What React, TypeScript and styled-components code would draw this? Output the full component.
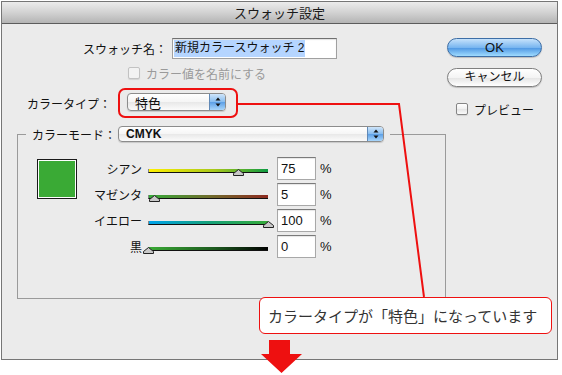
import React from "react";
import styled, { createGlobalStyle } from "styled-components";

const GlobalStyle = createGlobalStyle`
  html, body {
    margin: 0;
    padding: 0;
    background: #fff;
  }
  body {
    font-family: "Liberation Sans", "Noto Sans CJK JP", sans-serif;
    font-size: 12px;
    color: #111;
  }
  * {
    box-sizing: border-box;
  }
`;

const RED = "#ee1010";

type SliderData = {
  label: string;
  value: number;
  gradient: string;
};

const sliders: SliderData[] = [
  { label: "シアン", value: 75, gradient: "linear-gradient(to right, #fff000, #a8c81a 55%, #0c9a42)" },
  { label: "マゼンタ", value: 5, gradient: "linear-gradient(to right, #35aa38, #6f6e2c 50%, #8d2a20)" },
  { label: "イエロー", value: 100, gradient: "linear-gradient(to right, #00a3ea, #14a07a 50%, #35aa38)" },
  { label: "黒", value: 0, gradient: "linear-gradient(to right, #3aaa35, #1d5a1f 55%, #000)" },
];

export default function App() {
  return (
    <Page>
      <GlobalStyle />
      <Window>
        <TitleBar>スウォッチ設定</TitleBar>
        <Body>
          <Top>
            <LeftForm>
              <NameRow>
                <NameLabel>スウォッチ名：</NameLabel>
                <NameInput>
                  <Selection>新規カラースウォッチ 2</Selection>
                </NameInput>
              </NameRow>
              <CheckRow $indent={126} $top={8}>
                <CheckBox $disabled />
                <CheckText $disabled>カラー値を名前にする</CheckText>
              </CheckRow>
              <TypeRow>
                <TypeLabel>カラータイプ：</TypeLabel>
                <Highlight>
                  <Popup width={99} height={18} text="特色" />
                </Highlight>
              </TypeRow>
            </LeftForm>
            <ButtonColumn>
              <AquaButton $primary>OK</AquaButton>
              <AquaButton>キャンセル</AquaButton>
              <CheckRow $indent={9} $top={16}>
                <CheckBox />
                <CheckText>プレビュー</CheckText>
              </CheckRow>
            </ButtonColumn>
          </Top>

          <Group>
            <GroupLegend>
              <LegendLabel>カラーモード：</LegendLabel>
              <Popup width={266} height={16} text="CMYK" bold />
            </GroupLegend>
            <GroupContent>
              <Swatch>
                <SwatchFill />
              </Swatch>
              <SliderList>
                {sliders.map((s) => (
                  <SliderRow key={s.label}>
                    <SliderLabel>{s.label}</SliderLabel>
                    <TrackCell>
                      <Track style={{ background: s.gradient }} />
                      <Thumb style={{ left: `calc(${s.value}% - 5px)` }}>
                        <svg width="11" height="7" viewBox="0 0 11 7">
                          <path
                            d="M5.5 0.5 L10.5 4.5 L10.5 6.5 L0.5 6.5 L0.5 4.5 Z"
                            fill="#c8c8c8"
                            stroke="#222"
                            strokeWidth="1"
                          />
                        </svg>
                      </Thumb>
                    </TrackCell>
                    <ValueInput>{s.value}</ValueInput>
                    <Percent>%</Percent>
                  </SliderRow>
                ))}
              </SliderList>
            </GroupContent>
          </Group>
        </Body>
      </Window>

      <Overlay width="562" height="375" viewBox="0 0 562 375">
        <polyline
          points="238,104 399,104 424,297"
          fill="none"
          stroke={RED}
          strokeWidth="2"
        />
        <polygon
          points="269,340 290,340 290,354 302,354 281.5,373 261,354 269,354"
          fill={RED}
        />
      </Overlay>
      <Callout>カラータイプが「特色」になっています</Callout>
    </Page>
  );
}

function Popup({
  width,
  height,
  text,
  bold,
}: {
  width: number;
  height: number;
  text: string;
  bold?: boolean;
}) {
  return (
    <PopupBox $w={width} $h={height}>
      <PopupText $bold={bold}>{text}</PopupText>
      <Stepper>
        <svg width="6" height="10" viewBox="0 0 6 10">
          <path d="M3 0.5 L5.5 3.5 L0.5 3.5 Z" fill="#111" />
          <path d="M3 9.5 L5.5 6.5 L0.5 6.5 Z" fill="#111" />
        </svg>
      </Stepper>
    </PopupBox>
  );
}

const Page = styled.div`
  position: relative;
  width: 562px;
  height: 375px;
  overflow: hidden;
`;

const Window = styled.div`
  margin: 1px 0 0 1px;
  width: 557px;
  height: 359px;
  border: 1px solid #767676;
  background: #ebebeb;
  display: flex;
  flex-direction: column;
`;

const TitleBar = styled.div`
  height: 22px;
  flex-shrink: 0;
  border-bottom: 1px solid #5c5c5c;
  background: linear-gradient(#ececec, #d2d2d2 50%, #b4b4b4);
  display: flex;
  align-items: center;
  justify-content: center;
  font-family: "Noto Sans CJK JP", sans-serif;
  font-size: 13px;
  color: #1a1a1a;
`;

const Body = styled.div`
  display: flex;
  flex-direction: column;
  padding-top: 14px;
`;

const Top = styled.div`
  display: flex;
`;

const LeftForm = styled.div`
  width: 445px;
  display: flex;
  flex-direction: column;
`;

const NameRow = styled.div`
  display: flex;
  align-items: center;
  height: 21px;
`;

const NameLabel = styled.span`
  width: 165px;
  margin-right: 5px;
  text-align: right;
  font-size: 12px;
`;

const NameInput = styled.div`
  width: 165px;
  height: 21px;
  background: #fff;
  border: 1px solid #a0a0a0;
  border-top-color: #707070;
  box-shadow: inset 0 1px 1px rgba(0, 0, 0, 0.12);
  padding: 1px 0 0 1px;
  font-size: 12px;
`;

const Selection = styled.span`
  display: inline-block;
  height: 17px;
  line-height: 17px;
  padding: 0 1px;
  background: #b5d5ff;
`;

const CheckRow = styled.label<{ $indent: number; $top: number }>`
  display: flex;
  align-items: center;
  gap: 6px;
  height: 12px;
  margin-top: ${({ $top }) => $top}px;
  padding-left: ${({ $indent }) => $indent}px;
`;

const CheckBox = styled.span<{ $disabled?: boolean }>`
  width: 12px;
  height: 12px;
  border-radius: 2px;
  border: 1px solid ${({ $disabled }) => ($disabled ? "#c2c2c2" : "#858585")};
  background: ${({ $disabled }) =>
    $disabled ? "#f2f2f2" : "linear-gradient(#ffffff, #f0f0f0 50%, #e4e4e4 51%, #fafafa)"};
  box-shadow: 0 1px 1px rgba(0, 0, 0, 0.1);
`;

const CheckText = styled.span<{ $disabled?: boolean }>`
  font-size: 12px;
  color: ${({ $disabled }) => ($disabled ? "#9a9a9a" : "#111")};
`;

const TypeRow = styled.div`
  display: flex;
  align-items: center;
  margin-top: 9px;
  padding-left: 25px;
`;

const TypeLabel = styled.span`
  width: 91px;
  font-size: 12px;
`;

const Highlight = styled.div`
  width: 120px;
  height: 30px;
  border: 2px solid ${RED};
  border-radius: 7px;
  padding: 3px 0 0 7px;
`;

const PopupBox = styled.div<{ $w: number; $h: number }>`
  display: flex;
  width: ${({ $w }) => $w}px;
  height: ${({ $h }) => $h}px;
  border: 1px solid #8c8c8c;
  border-radius: 4px;
  overflow: hidden;
  background: linear-gradient(#ffffff, #f5f5f5 50%, #e8e8e8 51%, #fbfbfb);
  box-shadow: 0 1px 1px rgba(0, 0, 0, 0.15);
`;

const PopupText = styled.span<{ $bold?: boolean }>`
  flex: 1;
  display: flex;
  align-items: center;
  padding-left: 7px;
  font-size: ${({ $bold }) => ($bold ? "12px" : "13px")};
  font-weight: ${({ $bold }) => ($bold ? 700 : 400)};
`;

const Stepper = styled.span`
  width: 16px;
  display: flex;
  align-items: center;
  justify-content: center;
  border-left: 1px solid #6189b6;
  background: linear-gradient(#cfe5fa, #86bcef 50%, #5c9fe6 51%, #a9d6fb);
`;

const ButtonColumn = styled.div`
  width: 95px;
  display: flex;
  flex-direction: column;
  gap: 11px;

  & > label {
    margin-top: 5px;
  }
`;

const AquaButton = styled.button<{ $primary?: boolean }>`
  width: 95px;
  height: 19px;
  padding: 0;
  border-radius: 10px;
  border: 1px solid ${({ $primary }) => ($primary ? "#3d6ea6" : "#7f7f7f")};
  background: ${({ $primary }) =>
    $primary
      ? "linear-gradient(#c6e2fb, #79b6f0 50%, #4c95e2 51%, #9fdbff)"
      : "linear-gradient(#ffffff, #f4f4f4 50%, #e4e4e4 51%, #ffffff)"};
  box-shadow: 0 1px 1px rgba(0, 0, 0, 0.2);
  font-family: "Liberation Sans", "Noto Sans CJK JP", sans-serif;
  font-size: ${({ $primary }) => ($primary ? "13px" : "12px")};
  color: #111;
  line-height: 17px;
`;

const Group = styled.fieldset`
  margin: 8px 0 0 15px;
  width: 429px;
  height: 173px;
  padding: 0 0 0 8px;
  border: 1px solid #9a9a9a;
  min-width: 0;
`;

const GroupLegend = styled.legend`
  display: flex;
  align-items: center;
  padding: 0 6px;
  height: 16px;
`;

const LegendLabel = styled.span`
  width: 86px;
  font-size: 12px;
`;

const GroupContent = styled.div`
  display: flex;
  align-items: flex-start;
  margin-top: 15px;
`;

const Swatch = styled.div`
  width: 40px;
  height: 40px;
  margin: 2px 0 0 11px;
  border: 1px solid #1a1a1a;
  padding: 1px;
  background: #fff;
`;

const SwatchFill = styled.div`
  width: 100%;
  height: 100%;
  background: #3aaa35;
`;

const SliderList = styled.div`
  display: flex;
  flex-direction: column;
  gap: 3px;
`;

const SliderRow = styled.div`
  display: flex;
  align-items: center;
  height: 23px;
`;

const SliderLabel = styled.span`
  width: 65px;
  text-align: right;
  font-size: 12px;
`;

const TrackCell = styled.div`
  position: relative;
  width: 120px;
  height: 23px;
  margin-left: 6px;
`;

const Track = styled.div`
  position: absolute;
  top: 12px;
  left: 0;
  right: 0;
  height: 4px;
  border-bottom: 1px solid #111;
  border-left: 1px solid #888;
`;

const Thumb = styled.div`
  position: absolute;
  top: 12px;
  width: 11px;
  height: 7px;
  line-height: 0;
`;

const ValueInput = styled.div`
  width: 39px;
  height: 23px;
  margin-left: 9px;
  background: #fff;
  border: 1px solid #a8a8a8;
  border-top-color: #7a7a7a;
  box-shadow: inset 0 1px 1px rgba(0, 0, 0, 0.1);
  padding-left: 3px;
  font-size: 13px;
  line-height: 21px;
`;

const Percent = styled.span`
  margin-left: 4px;
  font-size: 13px;
`;

const Overlay = styled.svg`
  position: absolute;
  left: 0;
  top: 0;
  pointer-events: none;
`;

const Callout = styled.div`
  position: absolute;
  left: 259px;
  top: 297px;
  width: 293px;
  height: 37px;
  border: 1px solid ${RED};
  border-radius: 6px;
  background: #fff;
  padding-left: 8px;
  display: flex;
  align-items: center;
  font-family: "Noto Sans CJK JP", sans-serif;
  font-size: 15px;
  color: #333;
`;
